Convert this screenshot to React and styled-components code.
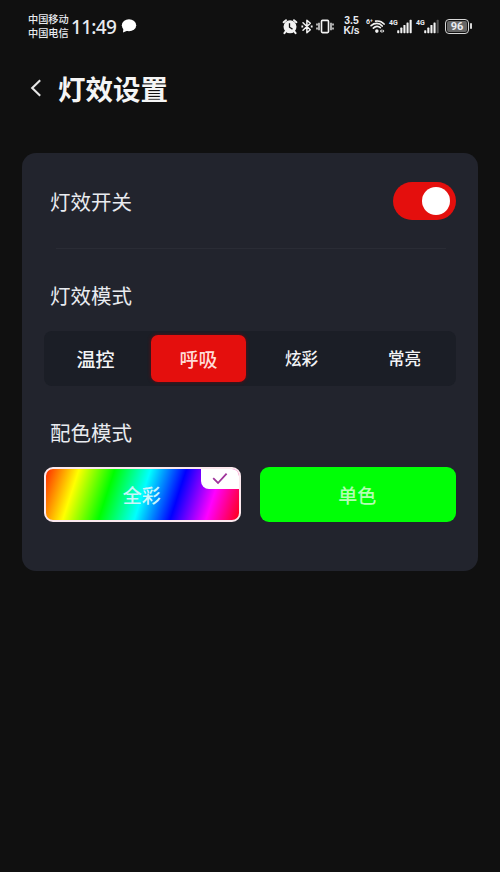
import React, { useState } from "react";
import styled, { createGlobalStyle } from "styled-components";

const modes = [
  { id: "temp", label: "温控", size: 19 },
  { id: "breath", label: "呼吸", size: 19 },
  { id: "dazzle", label: "炫彩", size: 16.5 },
  { id: "steady", label: "常亮", size: 16.5 },
];

const AlarmIcon = () => (
  <svg width="16" height="17" viewBox="0 0 16 17">
    <circle cx="8" cy="8.8" r="6.5" fill="#f2f2f2" />
    <path
      d="M1.6 4.2 4 2.2M14.4 4.2 12 2.2M3.6 13.6l-1.2 1.6M12.4 13.6l1.2 1.6"
      stroke="#f2f2f2"
      strokeWidth="2"
      strokeLinecap="round"
    />
    <path d="M7.5 5.2v4l3 1.9" stroke="#111" strokeWidth="1.3" fill="none" />
  </svg>
);

const BluetoothIcon = () => (
  <svg width="12" height="17" viewBox="0 0 12 17">
    <path
      d="M2 4.8 9.3 11.8 5.9 14.8V2.2L9.3 5.2 2 12.2"
      stroke="#f2f2f2"
      strokeWidth="1.5"
      fill="none"
      strokeLinejoin="round"
      strokeLinecap="round"
    />
    <path d="M.4 7.6h1.8v1.8H.4zM9.8 7.6h1.8v1.8H9.8z" fill="#f2f2f2" />
  </svg>
);

const VibrateIcon = () => (
  <svg width="18" height="17" viewBox="0 0 18 17">
    <rect
      x="5.5"
      y="2.4"
      width="7"
      height="12.2"
      rx="1"
      fill="none"
      stroke="#f2f2f2"
      strokeWidth="1.6"
    />
    <path
      d="M3 4.8v7.4M15 4.8v7.4M1 5.4v2M1 9.6v2M17 5.4v2M17 9.6v2"
      stroke="#f2f2f2"
      strokeWidth="1.4"
      fill="none"
    />
  </svg>
);

const WifiIcon = () => (
  <svg width="15" height="15" viewBox="0 0 16 15">
    <path
      d="M6 1.8C9.6 1.2 12.8 2.4 15 4.9M1.2 6.6C4.6 3.6 10 3.2 13 7M3.6 9.2C6 6.8 8.8 6.6 11 8.8"
      stroke="#f2f2f2"
      strokeWidth="1.8"
      fill="none"
      strokeLinecap="round"
    />
    <circle cx="7.3" cy="12.4" r="1.9" fill="#f2f2f2" />
    <path d="m12.4 10.4-1.9 2 1.9 2zM13.4 10.4l1.9 2-1.9 2z" fill="#f2f2f2" />
  </svg>
);

const SignalIcon = ({ weak }) => (
  <svg width="15" height="15" viewBox="0 0 15 15">
    {[0, 1, 2, 3, 4].map((i) => (
      <rect
        key={i}
        x={0.2 + i * 3.1}
        y={11.2 - i * 2.6}
        width="2.1"
        height={3 + i * 2.6}
        rx=".6"
        fill={weak && i === 4 ? "#555" : "#f2f2f2"}
      />
    ))}
  </svg>
);

const ChatIcon = () => (
  <svg width="16" height="14" viewBox="0 0 16 14">
    <ellipse cx="8" cy="6.3" rx="7.2" ry="6" fill="#fff" />
    <path d="M2.6 8 2 13.4 8 11z" fill="#fff" />
  </svg>
);

function App() {
  const [enabled, setEnabled] = useState(true);
  const [mode, setMode] = useState("breath");
  const [color, setColor] = useState("full");

  return (
    <>
      <GlobalStyle />
      <Screen>
        <StatusBar>
          <Carriers>
            <span>中国移动</span>
            <span>中国电信</span>
          </Carriers>
          <Clock>11:49</Clock>
          <ChatIcon />
          <StatusIcons>
            <AlarmIcon />
            <BluetoothIcon />
            <VibrateIcon />
            <Speed>
              <span>3.5</span>
              <span>K/s</span>
            </Speed>
            <Network>
              <WifiLabel>6⁺</WifiLabel>
              <WifiIcon />
            </Network>
            <Network>
              <NetworkLabel>4G</NetworkLabel>
              <SignalIcon />
            </Network>
            <Network>
              <NetworkLabel>4G</NetworkLabel>
              <SignalIcon weak />
            </Network>
            <Battery>
              <BatteryLevel>96</BatteryLevel>
            </Battery>
          </StatusIcons>
        </StatusBar>

        <Header>
          <BackButton aria-label="返回">
            <svg width="12" height="20" viewBox="0 0 12 20">
              <path
                d="M10.2 2.2 2.2 10l8 7.8"
                fill="none"
                stroke="#e6e6e6"
                strokeWidth="2.1"
              />
            </svg>
          </BackButton>
          <Title>灯效设置</Title>
        </Header>

        <Card>
          <SwitchRow>
            <Label>灯效开关</Label>
            <Toggle $on={enabled} onClick={() => setEnabled(!enabled)}>
              <Knob />
            </Toggle>
          </SwitchRow>
          <Divider />

          <SectionLabel>灯效模式</SectionLabel>
          <Segments>
            {modes.map((m) => (
              <Segment
                key={m.id}
                $size={m.size}
                $active={mode === m.id}
                onClick={() => setMode(m.id)}
              >
                {m.label}
              </Segment>
            ))}
          </Segments>

          <SectionLabel>配色模式</SectionLabel>
          <Colors>
            <RainbowButton
              $active={color === "full"}
              onClick={() => setColor("full")}
            >
              全彩
              {color === "full" && (
                <CheckBadge>
                  <svg width="16" height="13" viewBox="0 0 16 13">
                    <path
                      d="M1.2 6.2 6 11 14.6 1.6"
                      fill="none"
                      stroke="#a0359c"
                      strokeWidth="1.8"
                    />
                  </svg>
                </CheckBadge>
              )}
            </RainbowButton>
            <SolidButton
              $active={color === "single"}
              onClick={() => setColor("single")}
            >
              单色
            </SolidButton>
          </Colors>
        </Card>
      </Screen>
    </>
  );
}

// Styled components

const GlobalStyle = createGlobalStyle`
  * {
    box-sizing: border-box;
  }

  body {
    margin: 0;
    background: #101010;
    font-family: Roboto, "Noto Sans CJK SC", sans-serif;
  }

  button {
    font-family: inherit;
    border: none;
    padding: 0;
    cursor: pointer;
  }

  svg {
    display: block;
    flex-shrink: 0;
  }
`;

const Screen = styled.div`
  min-height: 872px;
  background: #101010;
  color: #e9ebf0;
`;

const StatusBar = styled.div`
  display: flex;
  align-items: center;
  height: 52px;
  padding: 0 28px;
`;

const Carriers = styled.div`
  display: flex;
  flex-direction: column;
  width: 43px;
  padding-top: 2px;
  font-size: 10.2px;
  font-weight: 500;
  line-height: 14px;
  white-space: nowrap;
`;

const Clock = styled.span`
  width: 50px;
  padding-top: 1px;
  font-family: "Noto Sans", sans-serif;
  font-size: 19px;
  font-weight: 500;
  line-height: 24px;
  letter-spacing: -0.7px;
`;

const StatusIcons = styled.div`
  display: flex;
  align-items: center;
  margin-left: auto;
  gap: 3px;
`;

const Speed = styled.div`
  display: flex;
  flex-direction: column;
  align-items: center;
  width: 17px;
  margin: 0 2px 0 6px;
  font-family: "Liberation Sans", sans-serif;
  font-size: 10.4px;
  font-weight: 700;
  line-height: 10px;
  white-space: nowrap;
`;

const Network = styled.div`
  display: flex;
  align-items: flex-start;
  margin-left: 1px;
`;

const NetworkLabel = styled.span`
  width: 9px;
  margin-right: -1px;
  font-size: 7px;
  font-weight: 700;
  line-height: 8px;
`;

const WifiLabel = styled(NetworkLabel)`
  margin: -1px -5px 0 0;
`;

const Battery = styled.div`
  display: flex;
  position: relative;
  width: 24px;
  height: 15px;
  margin: 0 3px;
  padding: 1px;
  border: 1.5px solid #d8d8d8;
  border-radius: 4px;

  &::after {
    content: "";
    position: absolute;
    top: 3px;
    right: -4px;
    width: 2px;
    height: 6px;
    border-radius: 1px;
    background: #d8d8d8;
  }
`;

const BatteryLevel = styled.span`
  flex: 1;
  border-radius: 2px;
  background: #666;
  font-size: 11px;
  font-weight: 700;
  line-height: 12px;
  text-align: center;
`;

const Header = styled.header`
  display: flex;
  align-items: center;
  height: 72px;
  padding-left: 30px;
`;

const BackButton = styled.button`
  display: flex;
  width: 28px;
  background: none;
`;

const Title = styled.h1`
  margin: 0;
  padding-top: 6px;
  font-size: 27.5px;
  font-weight: 700;
  line-height: 40px;
  color: #f5f5f5;
`;

const Card = styled.main`
  height: 418px;
  margin: 29px 22px 0;
  padding: 0 22px;
  border-radius: 14px;
  background: #22242d;
`;

const SwitchRow = styled.div`
  display: flex;
  align-items: center;
  justify-content: space-between;
  height: 95px;
  padding-left: 6px;
`;

const Label = styled.span`
  padding-top: 5px;
  font-size: 20.5px;
  line-height: 30px;
`;

const Toggle = styled.button`
  display: flex;
  align-items: center;
  justify-content: ${(props) => (props.$on ? "flex-end" : "flex-start")};
  width: 63px;
  height: 38px;
  padding: 0 6px;
  border-radius: 19px;
  background: ${(props) => (props.$on ? "#e40f0d" : "#44464f")};
`;

const Knob = styled.span`
  width: 28px;
  height: 28px;
  border-radius: 50%;
  background: #fff;
`;

const Divider = styled.div`
  height: 1px;
  margin: 0 10px 0 12px;
  background: #2a2c35;
`;

const SectionLabel = styled.h2`
  margin: 0;
  padding: 33px 0 0 6px;
  font-size: 20.5px;
  font-weight: 400;
  line-height: 30px;
`;

const Segments = styled.div`
  display: grid;
  grid-template-columns: repeat(4, 1fr);
  height: 55px;
  margin-top: 19px;
  border-radius: 8px;
  background: #1b1e26;
`;

const Segment = styled.button`
  margin: 4px;
  padding-bottom: 1px;
  border-radius: 7px;
  background: ${(props) => (props.$active ? "#e40f0d" : "transparent")};
  box-shadow: ${(props) => (props.$active ? "0 0 3px 1px #4a1118" : "none")};
  color: ${(props) => (props.$active ? "#ffdcd8" : "#f3f4f6")};
  font-size: ${(props) => props.$size}px;
  font-weight: 500;
`;

const Colors = styled.div`
  display: grid;
  grid-template-columns: 1fr 1fr;
  gap: 19px;
  height: 55px;
  margin-top: 18px;
`;

const ColorButton = styled.button`
  position: relative;
  overflow: hidden;
  padding: 0 1px 1px 0;
  border: ${(props) => (props.$active ? "2px solid #fbe9ee" : "none")};
  border-radius: 9px;
  font-size: 19px;
  font-weight: 500;
`;

const RainbowButton = styled(ColorButton)`
  background: linear-gradient(
      108deg,
      #ff1a00,
      #ff0,
      #0f0,
      #0ff,
      #00f,
      #f0f,
      #f00
    )
    border-box;
  color: #c9f6fb;
`;

const SolidButton = styled(ColorButton)`
  background: #00ff06;
  color: #b4ffb4;
`;

const CheckBadge = styled.span`
  position: absolute;
  top: -1px;
  right: -1px;
  display: flex;
  align-items: center;
  justify-content: center;
  width: 39px;
  height: 21px;
  border-bottom-left-radius: 8px;
  background: #fff;
`;

export default App;
